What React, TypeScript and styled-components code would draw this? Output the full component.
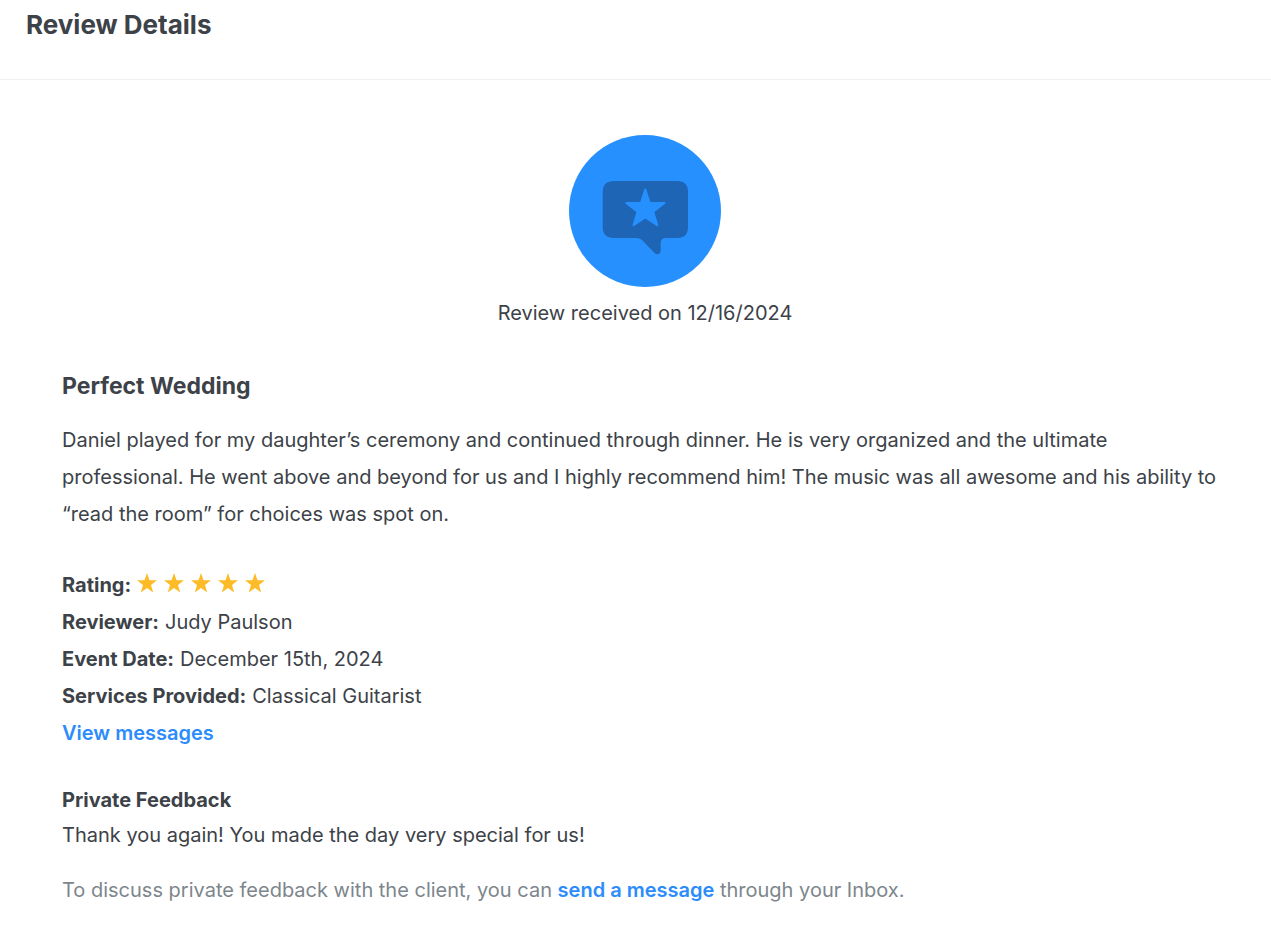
import React from 'react';
import styled, { createGlobalStyle } from 'styled-components';

const GlobalStyle = createGlobalStyle`
  *, *::before, *::after { box-sizing: border-box; }
  body {
    margin: 0;
    background: #fff;
    color: #3c4248;
    font-family: Inter, "Liberation Sans", sans-serif;
    font-size: 20px;
    line-height: 37px;
  }
`;

const Header = styled.header`
  padding: 7px 26px 36px;
  border-bottom: 1px solid #eef0f1;
`;

const PageTitle = styled.h1`
  margin: 0;
  font-size: 26px;
  line-height: 36px;
  font-weight: 700;
`;

const Main = styled.main`
  padding: 55px 43px 18px 62px;
`;

const Received = styled.section`
  display: flex;
  flex-direction: column;
  align-items: center;
  gap: 8px;
`;

const Badge = styled.svg`
  display: block;
  width: 152px;
  height: 152px;
`;

const Text = styled.p<{ $muted?: boolean }>`
  margin: 0;
  color: ${({ $muted }) => ($muted ? '#7d868c' : 'inherit')};
`;

const Review = styled.article`
  margin-top: 36px;
`;

const ReviewTitle = styled.h2`
  margin: 0 0 18px;
  font-size: 23px;
  line-height: 36px;
  font-weight: 700;
`;

const Details = styled.dl`
  margin: 34px 0 0;
`;

const Detail = styled.div`
  display: flex;
  gap: 6px;
`;

const Term = styled.dt`
  font-weight: 700;
`;

const Value = styled.dd`
  margin: 0;
`;

const Stars = styled.span`
  display: flex;
  gap: 7px;
  padding-top: 6px;
`;

const StarIcon = styled.svg`
  width: 20px;
  height: 20px;
  fill: #fdbc27;
`;

const Link = styled.a`
  color: #2c8cfb;
  font-weight: 600;
  text-decoration: none;
`;

const Feedback = styled.section`
  display: grid;
  gap: 18px;
  margin-top: 32px;
`;

const FeedbackTitle = styled.h3`
  margin: 0;
  font-size: 20px;
  line-height: 33px;
  font-weight: 700;
`;

const rating = 5;

export default function App() {
  return (
    <>
      <GlobalStyle />
      <Header>
        <PageTitle>Review Details</PageTitle>
      </Header>
      <Main>
        <Received>
          <Badge viewBox="0 0 152 152" aria-hidden="true">
            <circle cx="76" cy="76" r="76" fill="#2690ff" />
            <path
              fill="#1e66b5"
              d="M45 46H108Q119 46 119 57V92Q119 103 108 103H97Q91.7 103 91.7 108V115.500C91.700 119 88 120.500 85.500 118L73.500 105.500Q71.500 103 68 103H45Q33.700 103 33.700 92V57Q33.700 46 45 46Z"
            />
            <path
              fill="#2690ff"
              stroke="#2690ff"
              strokeWidth="2"
              strokeLinejoin="round"
              d="M76.300 54.500L80.800 68H95.500L84.300 76.800L88.300 90.200L76.300 82.500L64.500 90.200L68.500 76.800L57.200 68H71.900Z"
            />
          </Badge>
          <Text>Review received on 12/16/2024</Text>
        </Received>

        <Review>
          <ReviewTitle>Perfect Wedding</ReviewTitle>
          <Text>
            Daniel played for my daughter’s ceremony and continued through dinner. He is very
            organized and the ultimate professional. He went above and beyond for us and I highly
            recommend him! The music was all awesome and his ability to “read the room” for choices
            was spot on.
          </Text>
          <Details>
            <Detail>
              <Term>Rating:</Term>
              <Value>
                <Stars role="img" aria-label="5 out of 5 stars">
                  {Array.from({ length: rating }, (_, i) => (
                    <StarIcon key={i} viewBox="0 0 20 20">
                      <path d="M10 0L12.500 7.200H20L14 11.900L16.200 19.500L10 15L3.800 19.500L6 11.900L0 7.200H7.500Z" />
                    </StarIcon>
                  ))}
                </Stars>
              </Value>
            </Detail>
            <Detail>
              <Term>Reviewer:</Term>
              <Value>Judy Paulson</Value>
            </Detail>
            <Detail>
              <Term>Event Date:</Term>
              <Value>December 15th, 2024</Value>
            </Detail>
            <Detail>
              <Term>Services Provided:</Term>
              <Value>Classical Guitarist</Value>
            </Detail>
          </Details>
          <Link href="#messages">View messages</Link>
        </Review>

        <Feedback>
          <div>
            <FeedbackTitle>Private Feedback</FeedbackTitle>
            <Text>Thank you again! You made the day very special for us!</Text>
          </div>
          <Text $muted>
            To discuss private feedback with the client, you can{' '}
            <Link href="#compose">send a message</Link> through your Inbox.
          </Text>
        </Feedback>
      </Main>
    </>
  );
}
